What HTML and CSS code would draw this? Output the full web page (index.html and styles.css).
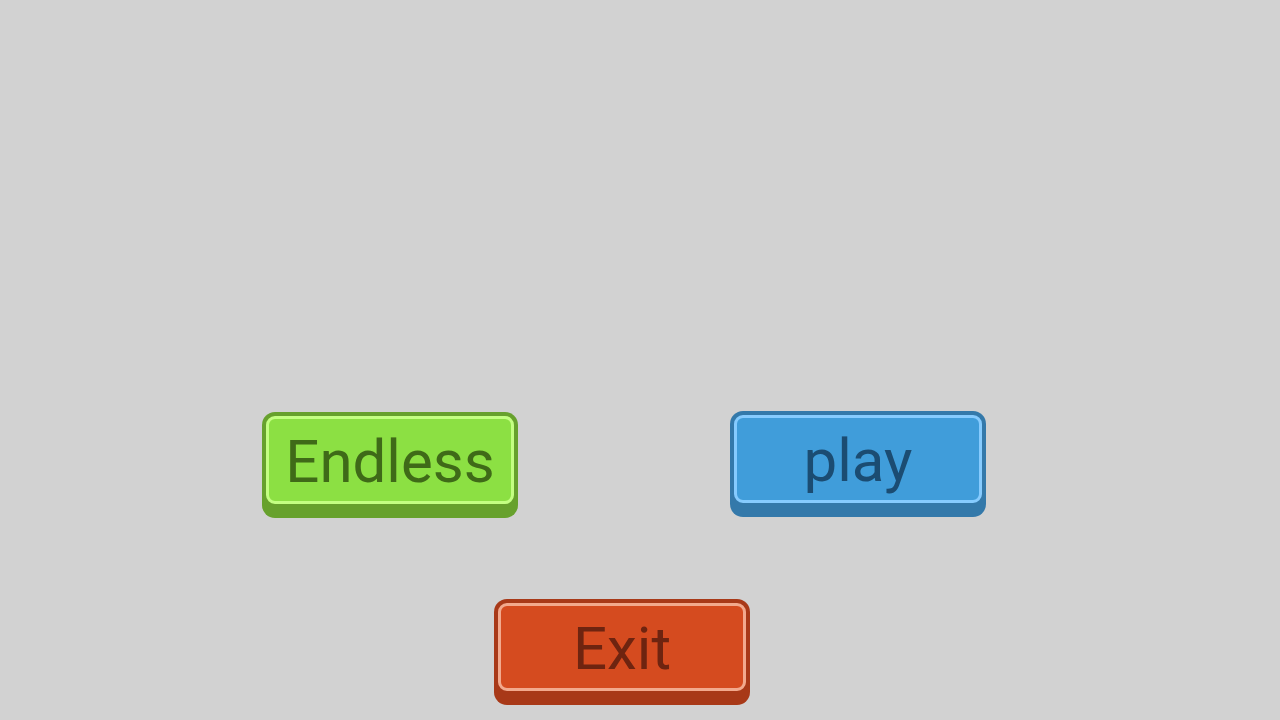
FILE: index.html
```html
<!DOCTYPE html>
<html>
<head>
<meta charset="utf-8">
<link rel="stylesheet" href="styles.css">
</head>
<body>
<div class="stage">
  <div class="row top-row">
    <div class="btn green endless"><div class="face">Endless</div></div>
    <div class="btn blue"><div class="face">play</div></div>
  </div>
  <div class="row bottom-row">
    <div class="btn red"><div class="face">Exit</div></div>
  </div>
</div>
</body>
</html>
```
FILE: styles.css
```css
html, body {
  margin: 0;
  padding: 0;
  background: #d2d2d2;
  width: 1280px;
  height: 720px;
  overflow: hidden;
  font-family: Roboto, "Liberation Sans", sans-serif;
}
.stage {
  display: flex;
  flex-direction: column;
  padding-top: 411px;
}
.row {
  display: flex;
  align-items: flex-start;
}
.top-row {
  padding-left: 262px;
  gap: 212px;
}
.bottom-row {
  padding-left: 494px;
  margin-top: 81px;
}
.btn {
  width: 256px;
  height: 106px;
  box-sizing: border-box;
  padding: 4px 4px 14px 4px;
  border-radius: 13px;
}
.endless {
  margin-top: 1px;
}
.face {
  height: 100%;
  box-sizing: border-box;
  border: 3.5px solid;
  border-radius: 9px;
  display: flex;
  align-items: center;
  justify-content: center;
  font-size: 60px;
  line-height: 1;
  padding-top: 3px;
}
.green { background: #67a12d; }
.green .face { background: #8ce043; border-color: #c4ff82; color: #3f6a18; }
.blue { background: #3479aa; }
.blue .face { background: #409dda; border-color: #86cbfe; color: #1b4c72; }
.red { background: #a83918; }
.red .face { background: #d54b1f; border-color: #f2a98d; color: #6e2410; }
```
